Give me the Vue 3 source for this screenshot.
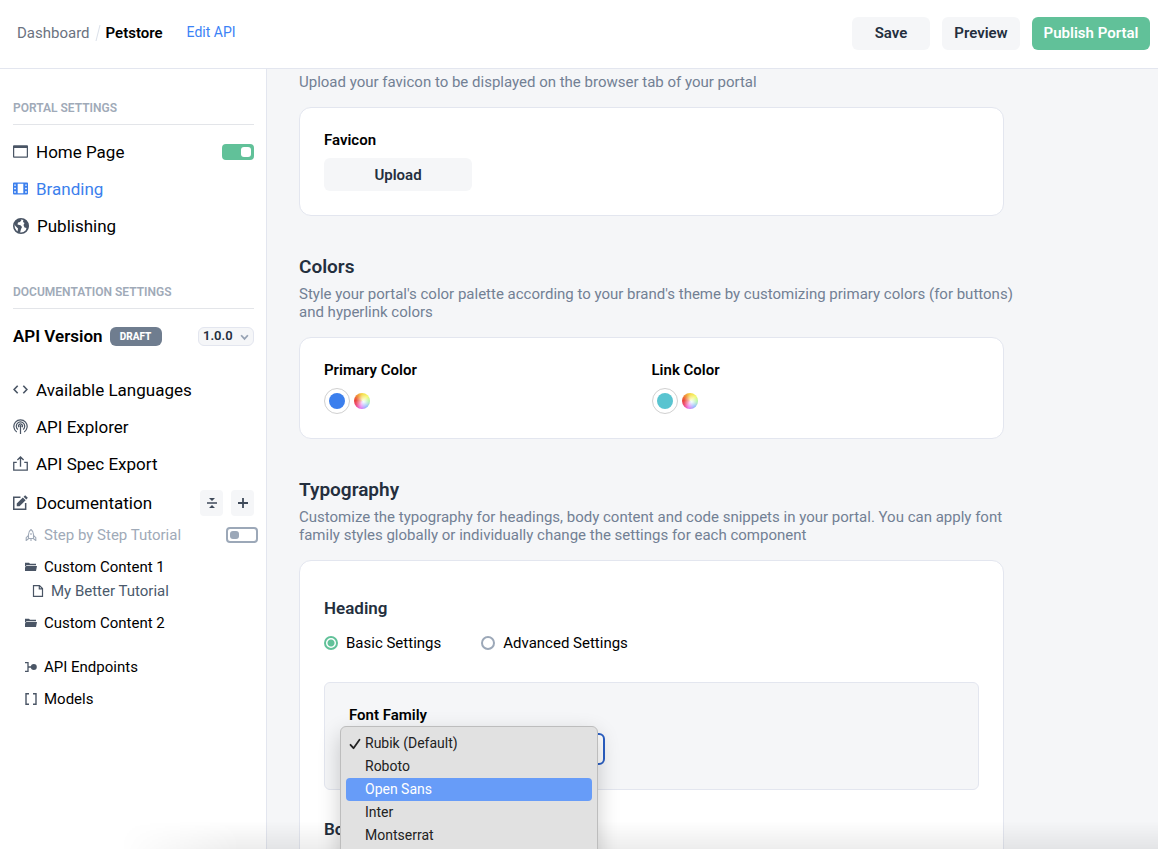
<script setup>
import { ref } from 'vue'

const homeEnabled = ref(true)
const tutorialEnabled = ref(false)
const version = ref('1.0.0')
const mode = ref('basic')
const font = ref('Rubik (Default)')
const fonts = ['Rubik (Default)', 'Roboto', 'Open Sans', 'Inter', 'Montserrat']
const highlighted = ref('Open Sans')
const colors = [
  { name: 'Primary Color', key: 'primary' },
  { name: 'Link Color', key: 'link' },
]
</script>

<template>
  <div class="app">
    <header class="topbar">
      <nav class="crumbs" aria-label="Breadcrumb">
        <a href="#" class="crumb">Dashboard</a>
        <svg class="slash" viewBox="0 0 6 18" aria-hidden="true"><path d="M1 17 5 1" stroke="#dbe1ea" fill="none" /></svg>
        <span class="current">Petstore</span>
        <a href="#" class="edit">Edit API</a>
      </nav>
      <div class="actions">
        <button type="button" class="btn">Save</button>
        <button type="button" class="btn">Preview</button>
        <button type="button" class="btn publish">Publish Portal</button>
      </div>
    </header>

    <div class="body">
      <aside class="sidebar">
        <h2 class="group">PORTAL SETTINGS</h2>
        <div class="row">
          <a href="#" class="item">
            <svg class="icon" viewBox="0 0 16 16"><path d="M1 1.300h14a1 1 0 0 1 1 1v11.400a1 1 0 0 1-1 1H1a1 1 0 0 1-1-1V2.300a1 1 0 0 1 1-1Zm.3 3v9h13.400v-9Z" fill="#4a5565" fill-rule="evenodd" /></svg>
            Home Page
          </a>
          <input v-model="homeEnabled" type="checkbox" class="switch" aria-label="Home Page enabled" />
        </div>
        <div class="row">
          <a href="#" class="item active">
            <svg class="icon" viewBox="0 0 16 16"><path d="M1 1.700h14a1 1 0 0 1 1 1v10.600a1 1 0 0 1-1 1H1a1 1 0 0 1-1-1V2.700a1 1 0 0 1 1-1ZM5 3v10h6V3ZM1.300 3.600v1.500h1.700V3.600Zm0 3.700v1.500h1.700V7.300Zm0 3.600v1.500h1.700v-1.500ZM13 3.600v1.500h1.700V3.600Zm0 3.700v1.500h1.700V7.300Zm0 3.600v1.500h1.700v-1.500Z" fill="#3b7fed" fill-rule="evenodd" /></svg>
            Branding
          </a>
        </div>
        <div class="row">
          <a href="#" class="item">
            <svg class="icon globe" viewBox="0 0 16 16"><circle cx="8" cy="8" r="7.200" fill="none" stroke="#4a5565" stroke-width="1.600" /><path d="M1 6c1.500-3 3.500-5 6-5.200L8.500 2 7 4l-2 .5L4.500 6.500l3 .8L9 9 8 11l-1 4-2.500-1L5 10.500 2.500 8ZM10.500 1.500 10 4l1.500 1L10.500 7l1 2.500 2 .5-.5 3L15.500 9 15 5 12.500 2Z" fill="#4a5565" /></svg>
            Publishing
          </a>
        </div>

        <h2 class="group docs">DOCUMENTATION SETTINGS</h2>
        <div class="row version">
          <div class="verlabel"><label for="version">API Version</label><span class="badge">DRAFT</span></div>
          <span class="pick">
            <select id="version" v-model="version"><option>1.0.0</option></select>
            <svg viewBox="0 0 8 6" aria-hidden="true"><path d="m1 1 3 3.200L7 1" fill="none" stroke="#97a3b4" stroke-width="1.600" /></svg>
          </span>
        </div>
        <div class="row">
          <a href="#" class="item">
            <svg class="icon" viewBox="0 0 16 16"><path d="M5 4 1.200 8 5 12M11 4l3.800 4L11 12" fill="none" stroke="#4a5565" stroke-width="1.700" /></svg>
            Available Languages
          </a>
        </div>
        <div class="row">
          <a href="#" class="item">
            <svg class="icon" viewBox="0 0 16 16"><g fill="none" stroke="#4a5565" stroke-width="1.300"><path d="M4 13.800a7.100 7.100 0 1 1 8 0M5.200 11.200a4.500 4.500 0 1 1 5.600 0" /><path d="M6.200 8.800a2.200 2.200 0 1 1 3.600 0M8 7.500V16" /></g><circle cx="8" cy="7.600" r="1.100" fill="#4a5565" /></svg>
            API Explorer
          </a>
        </div>
        <div class="row">
          <a href="#" class="item">
            <svg class="icon" viewBox="0 0 16 16"><path d="M4 6.700H.8v8.300h14.400V6.700H12M8 11.500V1.200M4.700 4.300 8 1l3.300 3.300" fill="none" stroke="#4a5565" stroke-width="1.400" /></svg>
            API Spec Export
          </a>
        </div>
        <div class="row doc">
          <a href="#" class="item">
            <svg class="icon" viewBox="0 0 16 16"><path d="M8 2.500H.8v12.700h12.700V8.500" fill="none" stroke="#4a5565" stroke-width="1.600" /><path d="m4 9 6.500-6.400 3 3L7 12H4ZM11.300 1.900 13 .2l2.800 2.800-1.600 1.700Z" fill="#4a5565" /></svg>
            Documentation
          </a>
          <span class="tools">
            <button type="button" class="tool" aria-label="Collapse all"><svg viewBox="0 0 12 12"><path d="M1 5.200h10v1.600H1ZM3 1h6L6 4ZM3 11h6L6 8Z" fill="#3f4a5a" /></svg></button>
            <button type="button" class="tool" aria-label="Add page"><svg viewBox="0 0 12 12"><path d="M6 1v10M1 6h10" stroke="#3f4a5a" stroke-width="1.800" /></svg></button>
          </span>
        </div>

        <div class="tree">
          <div class="leaf muted">
            <a href="#"><svg class="small" viewBox="0 0 12 12"><path d="M6 .5C4.300 1.700 3.500 3.500 3.500 5.500v4h5v-4C8.500 3.500 7.700 1.700 6 .5ZM3.500 6.500 1.200 8.700v2.800l2.300-1.700M8.500 6.500l2.300 2.200v2.800L8.500 9.800M6 4v2M6 9.500V12" fill="none" stroke="#a0aab8" stroke-width="1.100" /></svg>Step by Step Tutorial</a>
            <input v-model="tutorialEnabled" type="checkbox" class="switch" aria-label="Step by Step Tutorial enabled" />
          </div>
          <div class="leaf"><a href="#"><svg class="small" viewBox="0 0 12 12"><path d="M0 1.800h4l1 1h6v1.500H1.500L.5 5.500H0ZM1.300 5.100H12L11 10H0V6.500Z" fill="#4a5565" /></svg>Custom Content 1</a></div>
          <div class="leaf page"><a href="#"><svg class="small" viewBox="0 0 12 12"><path d="M1.500.6h6l3 3v7.800h-9ZM7.300.6v3.200h3.200" fill="none" stroke="#4a5565" stroke-width="1.200" /></svg>My Better Tutorial</a></div>
          <div class="leaf"><a href="#"><svg class="small" viewBox="0 0 12 12"><path d="M0 1.800h4l1 1h6v1.500H1.500L.5 5.500H0ZM1.300 5.100H12L11 10H0V6.500Z" fill="#4a5565" /></svg>Custom Content 2</a></div>
          <div class="leaf endpoints"><a href="#"><svg class="small" viewBox="0 0 12 12"><path d="M0 1.700h3v8.600H0M3 6h4" fill="none" stroke="#4a5565" stroke-width="1.300" /><circle cx="8.800" cy="6" r="3" fill="#4a5565" /></svg>API Endpoints</a></div>
          <div class="leaf"><a href="#"><svg class="small" viewBox="0 0 12 12"><path d="M4 .8H1v10.400h3M8 .8h3v10.400H8" fill="none" stroke="#4a5565" stroke-width="1.400" /></svg>Models</a></div>
        </div>
      </aside>

      <main class="main">
        <section class="section">
          <p class="desc">Upload your favicon to be displayed on the browser tab of your portal</p>
          <div class="card favicon">
            <h3 class="label">Favicon</h3>
            <button type="button" class="btn upload">Upload</button>
          </div>
        </section>

        <section class="section">
          <h2 class="title">Colors</h2>
          <p class="desc">Style your portal's color palette according to your brand's theme by customizing primary colors (for buttons)<br />and hyperlink colors</p>
          <div class="card colors">
            <div v-for="c in colors" :key="c.key">
              <h3 class="label">{{ c.name }}</h3>
              <div class="swatches">
                <button type="button" class="swatch" :class="c.key" :aria-label="c.name"></button>
                <button type="button" class="wheel" :aria-label="'Pick ' + c.name"></button>
              </div>
            </div>
          </div>
        </section>

        <section class="section">
          <h2 class="title">Typography</h2>
          <p class="desc">Customize the typography for headings, body content and code snippets in your portal. You can apply font<br />family styles globally or individually change the settings for each component</p>
          <div class="card typo">
            <h3 class="subtitle">Heading</h3>
            <div class="radios">
              <label class="choice"><input v-model="mode" type="radio" name="mode" value="basic" />Basic Settings</label>
              <label class="choice"><input v-model="mode" type="radio" name="mode" value="advanced" />Advanced Settings</label>
            </div>
            <div class="panel">
              <label class="label" for="font">Font Family</label>
              <div class="field">
                <select id="font" v-model="font" class="fontselect"><option v-for="f in fonts" :key="f">{{ f }}</option></select>
                <ul class="menu" role="listbox" aria-label="Font Family">
                  <li v-for="f in fonts" :key="f" role="option" :aria-selected="f === font" :class="{ hot: f === highlighted }">
                    <svg v-if="f === font" class="check" viewBox="0 0 12 12"><path d="m1.500 6.800 3 3.400 6-8.400" fill="none" stroke="#222" stroke-width="1.800" stroke-linecap="round" stroke-linejoin="round" /></svg>
                    {{ f }}
                  </li>
                </ul>
              </div>
            </div>
            <h3 class="subtitle next">Body</h3>
          </div>
        </section>
      </main>
    </div>
  </div>
</template>

<style>
body { margin: 0; }
</style>

<style scoped>
* { box-sizing: border-box; }
.app {
  position: relative;
  height: 100vh;
  overflow: hidden;
  display: flex;
  flex-direction: column;
  background: #fff;
  color: #000;
  font: 14px/18px Roboto, "Liberation Sans", sans-serif;
}
.app::after {
  content: "";
  position: absolute;
  z-index: 1;
  left: 120px;
  right: 0;
  bottom: 0;
  height: 28px;
  pointer-events: none;
  background: linear-gradient(to bottom, rgba(0, 0, 0, 0), rgba(0, 0, 0, 0.07));
  mask-image: linear-gradient(to right, transparent, #000 120px);
}
h2, h3, p, ul { margin: 0; padding: 0; }
a { color: inherit; text-decoration: none; }
button, select, input { font: inherit; margin: 0; }
svg { display: block; flex: none; }
.topbar {
  flex: none;
  height: 69px;
  display: flex;
  align-items: center;
  justify-content: space-between;
  padding: 0 8px 2px 17px;
  border-bottom: 1px solid #e3e6ef;
}
.crumbs { display: flex; align-items: center; font-size: 15px; }
.crumb { color: #6b7280; }
.slash { width: 6px; height: 18px; margin: 0 5px; }
.current { font-weight: 600; }
.edit { margin-left: 24px; padding-bottom: 2px; color: #3b82f6; font-size: 14px; }
.actions { display: flex; gap: 12px; }
.btn {
  height: 33px;
  min-width: 78px;
  padding: 0 10px;
  border: 0;
  border-radius: 6px;
  background: #f5f6f8;
  color: #242f3e;
  font-size: 15px;
  font-weight: 600;
}
.publish { min-width: 118px; background: #61c199; color: #fff; }
.body { flex: 1; min-height: 0; display: flex; }
.sidebar {
  flex: none;
  width: 267px;
  padding: 30px 12px 0 13px;
  border-right: 1px solid #e3e6ef;
}
.group {
  height: 26px;
  margin-bottom: 8px;
  border-bottom: 1px solid #e3e5e9;
  color: #a0aab8;
  font-size: 12px;
  font-weight: 600;
  line-height: 18px;
}
.group.docs { margin-top: 39px; }
.row { display: flex; align-items: center; justify-content: space-between; height: 37px; }
.item { display: flex; align-items: center; gap: 8px; font-size: 17px; }
.active { color: #3b7fed; }
.icon { width: 15px; height: 15px; }
.globe { width: 16px; height: 16px; }
.switch {
  appearance: none;
  flex: none;
  width: 32px;
  height: 16px;
  padding: 2px;
  border: 2px solid #9ca8b8;
  border-radius: 4px;
  background: #fff;
}
.switch::before { content: ""; display: block; width: 9px; height: 8px; border-radius: 3px; background: #9ca8b8; }
.switch:checked { border-color: #61c199; background: #61c199; padding: 1px; }
.switch:checked::before { width: 10px; height: 10px; margin-left: 16px; background: #fff; }
.version { height: 38px; margin-bottom: 16px; }
.verlabel { display: flex; align-items: center; gap: 7px; font-size: 17px; font-weight: 600; }
.badge {
  width: 52px;
  height: 19px;
  border-radius: 6px;
  background: #6f7d8f;
  color: #fff;
  font-size: 10px;
  font-weight: 800;
  line-height: 19px;
  text-align: center;
}
.pick { position: relative; }
.pick select {
  appearance: none;
  display: block;
  width: 56px;
  height: 19px;
  padding: 0 4px;
  border: 1px solid #e3e6ef;
  border-radius: 6px;
  background: #f5f6f8;
  color: #242f3e;
  font-size: 13px;
  font-weight: 600;
  line-height: 16px;
}
.pick svg { position: absolute; right: 5px; top: 7px; width: 9px; height: 7px; pointer-events: none; }
.doc { height: 41px; }
.tools { display: flex; gap: 8px; }
.tool {
  display: grid;
  place-items: center;
  width: 23px;
  height: 26px;
  padding: 0;
  border: 0;
  border-radius: 4px;
  background: #f5f6f8;
}
.tool svg { width: 12px; height: 12px; }
.tree { padding-left: 12px; }
.leaf { display: flex; align-items: center; justify-content: space-between; height: 24px; margin-bottom: 8px; font-size: 15px; }
.leaf a { display: flex; align-items: center; gap: 7px; }
.muted { margin-right: -4px; color: #a0aab8; }
.small { width: 12px; height: 12px; }
.page { margin-top: -8px; padding-left: 7px; color: #4a5a6c; }
.endpoints { margin-top: 20px; }
.main { flex: 1; min-width: 0; padding: 4px 32px 0; background: #f5f6f8; overflow: hidden; }
.section { max-width: 730px; }
.desc { color: #728094; font-size: 15px; }
.title { margin-top: 39px; color: #242f3e; font-size: 19px; font-weight: 600; line-height: 24px; margin-bottom: 6px; }
.card { max-width: 705px; margin-top: 16px; padding: 23px 24px; border: 1px solid #e3e6ef; border-radius: 12px; background: #fff; }
.label { display: block; font-size: 15px; font-weight: 600; line-height: 18px; }
.favicon { height: 109px; }
.upload { display: block; width: 148px; margin-top: 9px; }
.colors { display: grid; grid-template-columns: 1fr 1fr; height: 102px; }
.swatches { display: flex; align-items: center; gap: 4px; margin-top: 9px; }
.swatch { width: 26px; height: 26px; padding: 4px; border: 1px solid #d0d0d0; border-radius: 50%; background-clip: content-box; background-color: #3b7fed; }
.link { background-color: #59c4d0; }
.wheel {
  width: 16px;
  height: 16px;
  padding: 0;
  border: 0;
  border-radius: 50%;
  background:
    radial-gradient(circle at 60% 55%, rgba(255, 255, 255, 0.95), rgba(255, 255, 255, 0) 60%),
    conic-gradient(from 0deg, #f6d94c, #f4f85c 50deg, #9ff58f 90deg, #70a8ff 140deg, #e66cf0 190deg, #ef4f7c 235deg, #e9453c 275deg, #f0933c 320deg, #f6d94c);
}
.typo { padding-top: 36px; height: 420px; }
.subtitle { color: #242f3e; font-size: 17px; font-weight: 600; line-height: 22px; }
.radios { display: flex; gap: 40px; margin-top: 15px; }
.choice { display: flex; align-items: center; gap: 8px; font-size: 15px; line-height: 18px; }
.choice input { appearance: none; width: 14px; height: 14px; border: 2px solid #9ca8b8; border-radius: 50%; background: #fff; }
.choice input:checked { border-color: #61c199; background: radial-gradient(circle, #61c199 3px, #fff 4px); }
.panel { margin-top: 30px; height: 108px; padding: 23px 24px; border: 1px solid #e3e6ef; border-radius: 6px; background: #f5f6f8; }
.field { position: relative; width: 256px; margin-top: 9px; }
.fontselect { appearance: none; display: block; width: 100%; height: 32px; padding: 0 12px; border: 2px solid #2a5fc4; border-radius: 6px; background: #fff; }
.menu {
  position: absolute;
  z-index: 2;
  left: -9px;
  top: -7px;
  width: 258px;
  height: 200px;
  padding: 5px;
  list-style: none;
  border: 1px solid #bdbdbd;
  border-radius: 6px;
  background: #e1e1e1;
  box-shadow: 0 8px 22px rgba(0, 0, 0, 0.2);
  color: #222;
}
.menu li { position: relative; height: 23px; padding-left: 19px; border-radius: 4px; font-size: 14px; line-height: 23px; }
.menu .hot { background: #679cf8; color: #fff; }
.check { position: absolute; left: 3px; top: 6px; width: 12px; height: 12px; }
.next { margin-top: 28px; }
</style>
